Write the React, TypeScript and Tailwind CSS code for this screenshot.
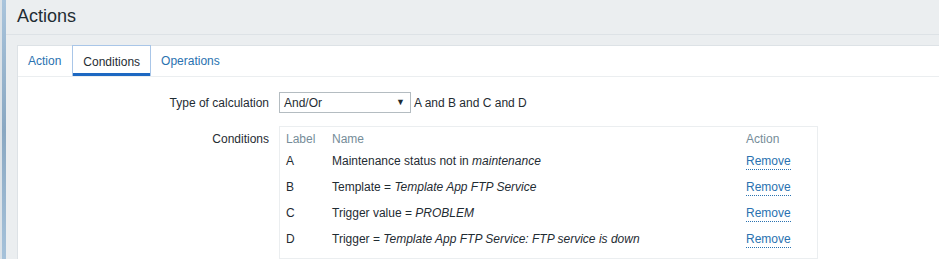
import React from "react";

const rows: { label: string; pre: string; em: string }[] = [
  { label: "A", pre: "Maintenance status not in ", em: "maintenance" },
  { label: "B", pre: "Template = ", em: "Template App FTP Service" },
  { label: "C", pre: "Trigger value = ", em: "PROBLEM" },
  { label: "D", pre: "Trigger = ", em: "Template App FTP Service: FTP service is down" },
];

export default function App() {
  return (
    <div className="w-[939px] h-[259px] overflow-hidden flex bg-[#ebeef0] font-['Liberation_Sans',Arial,sans-serif] text-[12px] text-[#1f2c33]">
      <div className="w-[6px] h-full flex shrink-0">
        <div className="w-[2px] h-full bg-[#dbe2e8]" />
        <div className="w-[4px] h-full bg-gradient-to-b from-[#a9c4dc] via-[#8aa8c2] to-[#a6c2da]" />
      </div>
      <div className="flex-1 flex flex-col min-w-0">
        <div className="h-[35px] border-b border-[#dde2e6] flex items-center pl-[11px] shrink-0">
          <h1 className="text-[18px] leading-none text-[#1f2c33] -mt-[2px]">Actions</h1>
        </div>
        <div className="pt-[10px] pl-[11px] flex-1 min-h-0">
          <div className="bg-white border-l border-t border-[#dde2e6] h-full">
            <div className="h-[31px] border-b border-[#ebeef0] flex items-stretch">
              <div className="pl-[10px] pr-[11px] flex items-center text-[#2a72b0]">Action</div>
              <div className="px-[10px] -mt-px flex items-center border border-b-0 border-[#a9c6e8] shadow-[inset_0_-3px_0_#1d68c2] pt-px">
                Conditions
              </div>
              <div className="pl-[10px] pr-[10px] flex items-center text-[#2a72b0]">Operations</div>
            </div>
            <div className="pt-[15px]">
              <div className="flex items-center">
                <div className="w-[251px] text-right">Type of calculation</div>
                <div className="ml-[10px] w-[132px] h-[21px] border border-[#b4bcc1] flex items-center justify-between pl-[4px] pr-[5px] bg-white">
                  <span>And/Or</span>
                  <span className="text-[9px] leading-none text-[#1f2c33]">▼</span>
                </div>
                <div className="ml-[3px]">A and B and C and D</div>
              </div>
              <div className="flex items-start mt-[13px]">
                <div className="w-[251px] text-right pt-[4px]">Conditions</div>
                <div className="ml-[10px] w-[539px] border border-[#ebeef0] pt-[1px] pb-[4px] pl-[6px]">
                  <div className="h-[22px] flex items-center text-[#768d99]">
                    <div className="w-[46px]">Label</div>
                    <div className="w-[414px]">Name</div>
                    <div>Action</div>
                  </div>
                  {rows.map((r) => (
                    <div key={r.label} className="h-[26px] flex items-start pt-[4px] leading-[14px]">
                      <div className="w-[46px]">{r.label}</div>
                      <div className="w-[414px]">
                        {r.pre}
                        <em>{r.em}</em>
                      </div>
                      <div>
                        <span className="text-[#2a72b0] border-b border-dotted border-[#2a72b0] pb-[1px]">Remove</span>
                      </div>
                    </div>
                  ))}
                </div>
              </div>
            </div>
          </div>
        </div>
      </div>
    </div>
  );
}
